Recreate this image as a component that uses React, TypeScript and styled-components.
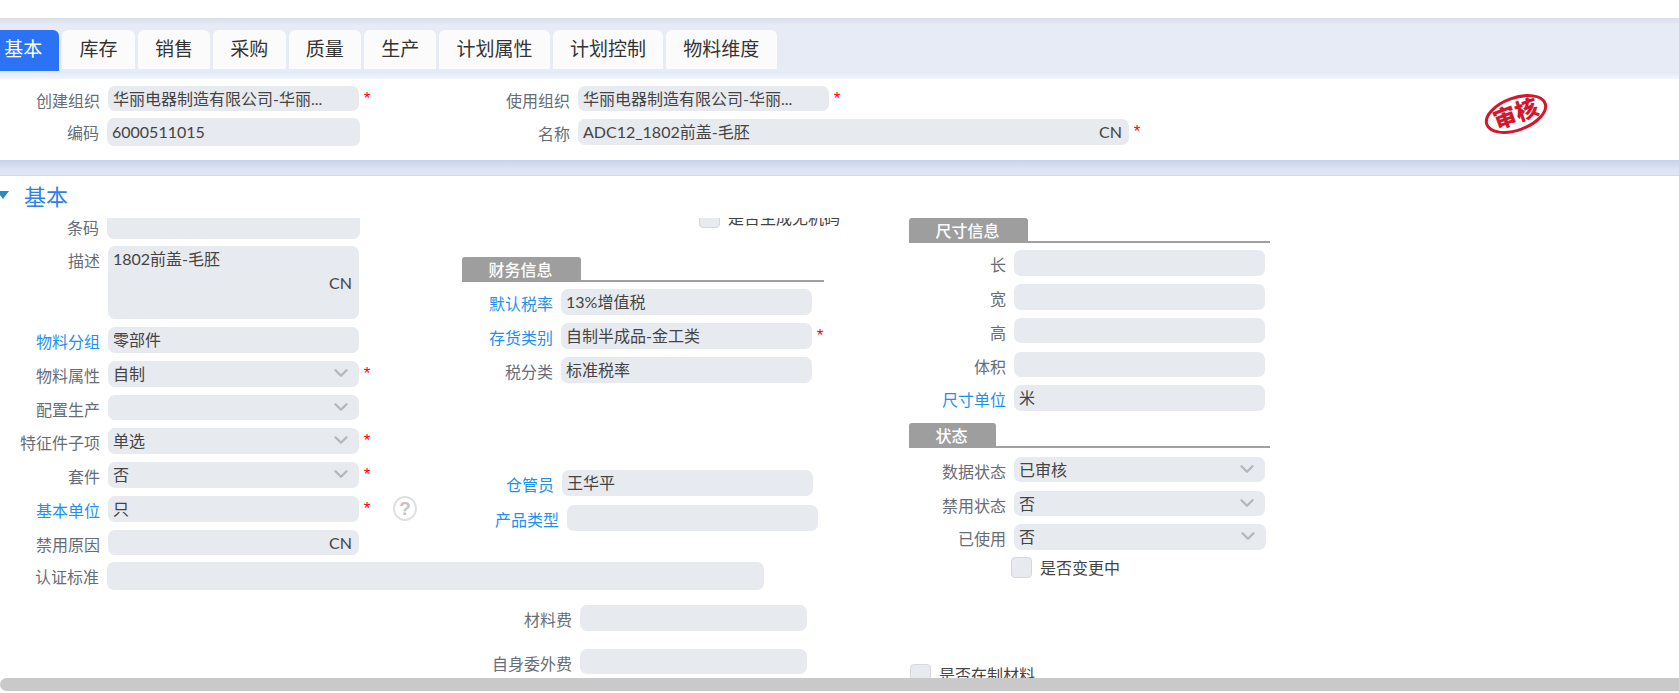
import React from "react";
import styled, { createGlobalStyle } from "styled-components";
import { ChevronDown } from "lucide-react";

const Global = createGlobalStyle`
  html, body { margin: 0; padding: 0; background: #fff; overflow: hidden; }
  body { font-family: "Noto Sans CJK SC", "Noto Sans", sans-serif; font-size: 16px; }
`;

const Page = styled.div`
  width: 1679px;
  height: 693px;
  overflow: hidden;
  display: flex;
  flex-direction: column;
  padding-top: 18px;
  box-sizing: border-box;
`;

const TabBand = styled.div`
  height: 61px;
  box-sizing: border-box;
  padding-top: 12px;
  background: linear-gradient(#d8deea 0, #e6ebf5 7px, #e6ebf5 53px, #e3e9f8 54px, #f1f5ff 61px);
`;

const TabStrip = styled.div`
  display: flex;
  gap: 3px;
  margin-left: -13px;
  align-items: flex-start;
`;

const Tab = styled.div<{ $active?: boolean }>`
  height: ${(p) => (p.$active ? 41 : 39)}px;
  line-height: 36px;
  padding: 0 17.2px;
  font-size: 19px;
  border-radius: 6px 6px 0 0;
  color: ${(p) => (p.$active ? "#fff" : "#333")};
  background: ${(p) => (p.$active ? "#2b72f5" : "#fbfbfb")};
`;

const FormBand = styled.div`
  height: 81px;
  box-sizing: border-box;
  padding-top: 7px;
  display: grid;
  grid-template-columns: 471px 1012px 1fr;
  align-items: start;
`;

const FormCol = styled.div`
  display: flex;
  flex-direction: column;
`;

const Stamp = styled.svg`
  display: block;
  margin-top: 7px;
`;

const Divider = styled.div`
  height: 16px;
  background: linear-gradient(#c6d3ec, #dde4f3 9px, #dfe5f3);
  border-bottom: 1px solid #d3daeb;
  box-sizing: border-box;
`;

const SectionBar = styled.div`
  height: 42px;
  display: flex;
  align-items: center;
  gap: 15px;
  margin-left: -3px;
  padding-bottom: 5px;
  box-sizing: border-box;
`;

const Caret = styled.span`
  width: 0;
  height: 0;
  border-left: 6.5px solid transparent;
  border-right: 6.5px solid transparent;
  border-top: 8px solid #2a87c8;
  margin-top: 0;
`;

const SectionTitle = styled.span`
  font-size: 22px;
  line-height: 30px;
  color: #2f7fea;
`;

const Viewport = styled.div`
  height: 460px;
  overflow: hidden;
  display: grid;
  grid-template-columns: 440px 469px 1fr;
  align-items: start;
`;

const Column = styled.div<{ $top?: number }>`
  display: flex;
  flex-direction: column;
  min-width: 0;
  margin-top: ${(p) => p.$top ?? 0}px;
`;

const Row = styled.div<{ $h?: number; $mt?: number }>`
  display: flex;
  align-items: flex-start;
  gap: 8px;
  height: ${(p) => p.$h ?? 26}px;
  margin-top: ${(p) => p.$mt ?? 8}px;
  flex: none;
`;

const Label = styled.div<{ $w: number; $link?: boolean }>`
  width: ${(p) => p.$w}px;
  flex: none;
  text-align: right;
  white-space: nowrap;
  font-size: 16px;
  line-height: 26px;
  margin-top: 1px;
  color: ${(p) => (p.$link ? "#1e90f0" : "#666d78")};
`;

const Field = styled.div<{ $w?: number }>`
  width: ${(p) => p.$w ?? 251}px;
  height: 100%;
  flex: none;
  box-sizing: border-box;
  background: #e7eaef;
  border-radius: 7px;
  display: flex;
  align-items: center;
  justify-content: space-between;
  padding: 0 7px 0 5px;
  font-family: "Lato", "Noto Sans CJK SC", sans-serif;
  font-size: 16px;
  line-height: 26px;
  color: #444;
  white-space: nowrap;
  overflow: hidden;
`;

const Memo = styled(Field)`
  display: block;
  padding-top: 1px;
  line-height: 24px;
`;

const MemoLang = styled.div`
  text-align: right;
`;

const Arrow = styled(ChevronDown)`
  color: #b4b7bc;
  flex: none;
  margin: -2px 0 0;
`;

const Star = styled.span`
  width: 8px;
  flex: none;
  margin: 3px 0 0 -4px;
  font-family: "Liberation Sans", sans-serif;
  font-size: 17px;
  line-height: 20px;
  color: #f00;
  text-align: center;
`;

const Help = styled.span`
  width: 24px;
  height: 25px;
  margin-left: 14px;
  flex: none;
  box-sizing: border-box;
  border: 2px solid #e0e0e0;
  border-radius: 50%;
  color: #c4c4c4;
  font-family: "Liberation Sans", sans-serif;
  font-size: 19px;
  font-weight: 700;
  line-height: 21px;
  text-align: center;
`;

const GroupHead = styled.div<{ $ml?: number; $mt?: number; $w: number }>`
  display: flex;
  flex: none;
  width: ${(p) => p.$w}px;
  height: 25px;
  box-sizing: border-box;
  margin-left: ${(p) => p.$ml ?? 0}px;
  margin-top: ${(p) => p.$mt ?? 0}px;
  border-bottom: 2px solid #a0a0a0;
`;

const GroupTab = styled.div`
  height: 25px;
  padding: 0 28.5px 0 26.5px;
  background: #9e9e9e;
  border-radius: 3px 3px 0 0;
  color: #fff;
  font-size: 16px;
  font-weight: 500;
  line-height: 25px;
`;

const CheckRow = styled.div<{ $ml?: number; $mt?: number }>`
  display: flex;
  align-items: center;
  gap: 8px;
  flex: none;
  height: 21px;
  margin-left: ${(p) => p.$ml ?? 0}px;
  margin-top: ${(p) => p.$mt ?? 0}px;
  font-size: 16px;
  line-height: 21px;
  color: #444;
`;

const Check = styled.span`
  width: 21px;
  height: 21px;
  flex: none;
  box-sizing: border-box;
  background: #e7eaef;
  border: 1px solid #d5d8df;
  border-radius: 4px;
`;

const Scrollbar = styled.div`
  height: 13px;
  flex: none;
  background: #c9c9c9;
  border-radius: 7px 0 0 7px;
`;

const Chevron = () => <Arrow size={22} strokeWidth={2.6} />;

const tabs = ["基本", "库存", "销售", "采购", "质量", "生产", "计划属性", "计划控制", "物料维度"];

export default function App() {
  return (
    <Page>
      <Global />
      <TabBand>
        <TabStrip>
          {tabs.map((t, i) => (
            <Tab key={t} $active={i === 0}>{t}</Tab>
          ))}
        </TabStrip>
      </TabBand>

      <FormBand>
        <FormCol>
          <Row $h={25} $mt={0}>
            <Label $w={100}>创建组织</Label>
            <Field>华丽电器制造有限公司-华丽...</Field>
            <Star>*</Star>
          </Row>
          <Row $h={28} $mt={7}>
            <Label $w={99}>编码</Label>
            <Field $w={253}>6000511015</Field>
          </Row>
        </FormCol>
        <FormCol>
          <Row $h={25} $mt={0}>
            <Label $w={99}>使用组织</Label>
            <Field>华丽电器制造有限公司-华丽...</Field>
            <Star>*</Star>
          </Row>
          <Row $mt={8}>
            <Label $w={99}>名称</Label>
            <Field $w={551}>ADC12_1802前盖-毛胚<span>CN</span></Field>
            <Star>*</Star>
          </Row>
        </FormCol>
        <Stamp width="66" height="42" viewBox="0 0 66 42">
          <g transform="rotate(-20 33 21)" fill="none" stroke="#d3182e">
            <ellipse cx="33" cy="21" rx="31" ry="16" strokeWidth="3" />
            <text x="33" y="29" textAnchor="middle" fontSize="23" fontWeight="900" fill="#d3182e" stroke="none" fontFamily="'Noto Sans CJK SC', sans-serif">审核</text>
          </g>
        </Stamp>
      </FormBand>

      <Divider />

      <SectionBar>
        <Caret />
        <SectionTitle>基本</SectionTitle>
      </SectionBar>

      <Viewport>
        <Column $top={-5}>
          <Row $mt={0}><Label $w={99}>条码</Label><Field $w={253} /></Row>
          <Row $h={73} $mt={7}>
            <Label $w={100}>描述</Label>
            <Memo>1802前盖-毛胚<MemoLang>CN</MemoLang></Memo>
          </Row>
          <Row><Label $w={100} $link>物料分组</Label><Field>零部件</Field></Row>
          <Row>
            <Label $w={100}>物料属性</Label><Field>自制<Chevron /></Field><Star>*</Star>
          </Row>
          <Row $h={25}>
            <Label $w={100}>配置生产</Label><Field><span /><Chevron /></Field>
          </Row>
          <Row>
            <Label $w={100}>特征件子项</Label><Field>单选<Chevron /></Field><Star>*</Star>
          </Row>
          <Row>
            <Label $w={100}>套件</Label><Field>否<Chevron /></Field><Star>*</Star>
          </Row>
          <Row>
            <Label $w={100} $link>基本单位</Label><Field>只</Field><Star>*</Star><Help>?</Help>
          </Row>
          <Row $h={25}>
            <Label $w={100}>禁用原因</Label><Field><span /><span>CN</span></Field>
          </Row>
          <Row $h={28} $mt={7}>
            <Label $w={99}>认证标准</Label><Field $w={657} />
          </Row>
        </Column>

        <Column $top={-11}>
          <CheckRow $ml={259}><Check />是否生成无机码</CheckRow>
          <GroupHead $ml={22} $mt={29} $w={362}><GroupTab>财务信息</GroupTab></GroupHead>
          <Row $mt={7}><Label $w={113} $link>默认税率</Label><Field>13%增值税</Field></Row>
          <Row><Label $w={113} $link>存货类别</Label><Field>自制半成品-金工类</Field><Star>*</Star></Row>
          <Row><Label $w={113}>税分类</Label><Field>标准税率</Field></Row>
          <Row $mt={87}><Label $w={114} $link>仓管员</Label><Field>王华平</Field></Row>
          <Row $mt={9}><Label $w={119} $link>产品类型</Label><Field /></Row>
          <Row $mt={74}><Label $w={132}>材料费</Label><Field $w={227} /></Row>
          <Row $h={25} $mt={18}><Label $w={132}>自身委外费</Label><Field $w={227} /></Row>
        </Column>

        <Column>
          <GroupHead $w={361}><GroupTab>尺寸信息</GroupTab></GroupHead>
          <Row $mt={7}><Label $w={97}>长</Label><Field /></Row>
          <Row><Label $w={97}>宽</Label><Field /></Row>
          <Row $h={25}><Label $w={97}>高</Label><Field /></Row>
          <Row $h={25} $mt={9}><Label $w={97}>体积</Label><Field /></Row>
          <Row><Label $w={97} $link>尺寸单位</Label><Field>米</Field></Row>
          <GroupHead $mt={12} $w={361}><GroupTab>状态</GroupTab></GroupHead>
          <Row $h={25} $mt={9}><Label $w={97}>数据状态</Label><Field>已审核<Chevron /></Field></Row>
          <Row $h={25} $mt={9}><Label $w={97}>禁用状态</Label><Field>否<Chevron /></Field></Row>
          <Row $mt={8}><Label $w={97}>已使用</Label><Field $w={252}>否<Chevron /></Field></Row>
          <CheckRow $ml={102} $mt={7}><Check />是否变更中</CheckRow>
          <CheckRow $ml={1} $mt={86}><Check />是否在制材料</CheckRow>
        </Column>
      </Viewport>

      <Scrollbar />
    </Page>
  );
}
